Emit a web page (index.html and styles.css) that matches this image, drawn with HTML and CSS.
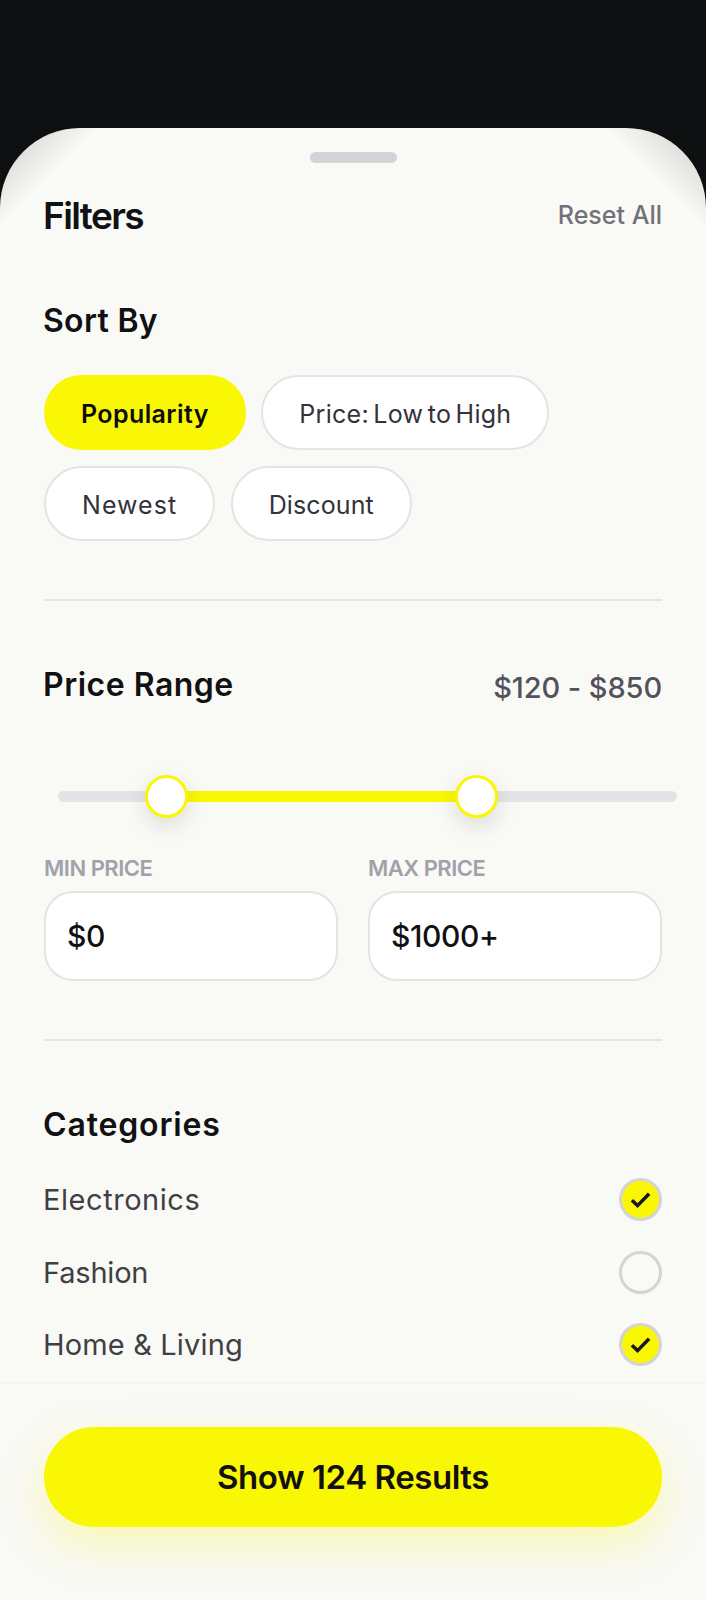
FILE: index.html
```html
<!DOCTYPE html>
<html lang="en">
<head>
<meta charset="utf-8">
<title>Filters</title>
<link rel="stylesheet" href="styles.css">
</head>
<body>
<main class="sheet">
  <div class="content">
    <div class="handle"></div>
    <header class="head">
      <h1 class="title">Filters</h1>
      <span class="reset">Reset All</span>
    </header>
    <h2 class="section sort-title">Sort By</h2>
    <div class="chips">
      <span class="chip chip-on">Popularity</span>
      <span class="chip">Price: Low to High</span>
      <span class="chip chip-wide">Newest</span>
      <span class="chip chip-tight">Discount</span>
    </div>
    <hr class="rule rule-sort">
    <div class="range-head">
      <h2 class="section range-title">Price Range</h2>
      <span class="range-value">$120 - $850</span>
    </div>
    <div class="slider">
      <div class="track"><div class="fill"></div></div>
      <span class="thumb thumb-a"></span>
      <span class="thumb thumb-b"></span>
    </div>
    <div class="inputs">
      <div class="field">
        <span class="field-label">MIN PRICE</span>
        <div class="field-box">$0</div>
      </div>
      <div class="field">
        <span class="field-label">MAX PRICE</span>
        <div class="field-box">$1000+</div>
      </div>
    </div>
    <hr class="rule rule-price">
    <h2 class="section cat-title">Categories</h2>
    <ul class="cats">
      <li class="cat"><span class="cat-name cat-wide">Electronics</span><span class="box box-on"><svg viewBox="0 0 16 16" class="tick"><path d="M2.5 8.5l3.6 3.4 7.4-7.6"/></svg></span></li>
      <li class="cat"><span class="cat-name cat-tight">Fashion</span><span class="box"></span></li>
      <li class="cat"><span class="cat-name">Home &amp; Living</span><span class="box box-on"><svg viewBox="0 0 16 16" class="tick"><path d="M2.5 8.5l3.6 3.4 7.4-7.6"/></svg></span></li>
    </ul>
  </div>
  <footer class="foot">
    <button class="cta" type="button">Show 124 Results</button>
  </footer>
</main>
</body>
</html>
```
FILE: styles.css
```css
* { box-sizing: border-box; }
html, body { margin: 0; padding: 0; }
body {
  width: 706px;
  height: 1600px;
  overflow: hidden;
  background: #0e0f11;
  padding-top: 128px;
  font-family: Inter, "Liberation Sans", sans-serif;
  color: #111114;
}
.sheet {
  position: relative;
  height: 1472px;
  display: flex;
  flex-direction: column;
  background: #f9f9f5;
  border-radius: 80px 80px 0 0;
  overflow: hidden;
}
.sheet::before, .sheet::after {
  content: "";
  position: absolute;
  top: 0;
  width: 100px;
  height: 100px;
}
.sheet::before { left: 0; background: linear-gradient(135deg, rgba(0,0,0,.11) 20%, rgba(0,0,0,0) 50%); }
.sheet::after { right: 0; background: linear-gradient(225deg, rgba(0,0,0,.11) 20%, rgba(0,0,0,0) 50%); }
.content {
  flex: 1;
  min-height: 0;
  padding: 24px 44px 0;
}
.handle {
  width: 87px;
  height: 11px;
  margin: 0 auto;
  border-radius: 6px;
  background: #d4d4d8;
}
.head {
  display: flex;
  justify-content: space-between;
  align-items: center;
  height: 44px;
  margin-top: 31px;
}
.title {
  margin: 0 0 0 -1px;
  font-size: 37px;
  line-height: 44px;
  font-weight: 600;
  letter-spacing: -1.6px;
}
.reset {
  font-size: 25px;
  font-weight: 500;
  color: #71717a;
  padding-bottom: 2px;
}
.section {
  margin: 0 0 0 -1px;
  font-size: 32px;
  line-height: 40px;
  font-weight: 600;
  letter-spacing: .3px;
}
.sort-title { margin-top: 63px; }
.chips {
  display: flex;
  flex-wrap: wrap;
  gap: 16px 15.5px;
  margin-top: 34px;
}
.chip {
  display: flex;
  align-items: center;
  height: 75px;
  padding: 2px 36px 0;
  border: 2px solid #e4e4e7;
  border-radius: 38px;
  background: #fff;
  font-size: 25px;
  font-weight: 400;
  color: #33333b;
  letter-spacing: .3px;
  word-spacing: -3px;
}
.chip-on {
  padding: 2px 35px 0;
  border-color: #f9f703;
  background: #f9f703;
  color: #0d0d10;
  font-weight: 600;
  letter-spacing: .4px;
}
.chip-wide { letter-spacing: 1.05px; }
.chip-tight { letter-spacing: .1px; }
.rule {
  height: 2px;
  margin: 0;
  border: 0;
  background: #e4e4e7;
}
.rule-sort { margin-top: 58px; }
.range-head {
  display: flex;
  justify-content: space-between;
  align-items: center;
  margin-top: 63px;
}
.range-title { letter-spacing: .5px; }
.range-value {
  font-size: 29px;
  font-weight: 500;
  color: #52525b;
  letter-spacing: -.1px;
  padding-top: 6px;
}
.slider {
  position: relative;
  height: 150px;
  padding-top: 86px;
}
.track {
  position: relative;
  width: 619px;
  height: 11px;
  margin-left: 14px;
  border-radius: 6px;
  background: #e4e4e7;
}
.fill {
  position: absolute;
  left: 110px;
  width: 310px;
  height: 11px;
  background: #f9f703;
}
.thumb {
  position: absolute;
  top: 70px;
  width: 43px;
  height: 43px;
  border: 3.6px solid #f9f703;
  border-radius: 50%;
  background: #fff;
  box-shadow: 0 8px 22px rgba(0,0,0,.12);
}
.thumb-a { left: 101px; }
.thumb-b { left: 411px; }
.inputs {
  display: grid;
  grid-template-columns: 1fr 1fr;
  gap: 30px;
}
.field-label {
  display: block;
  height: 26px;
  font-size: 22px;
  line-height: 26px;
  font-weight: 600;
  color: #a1a1aa;
  letter-spacing: -.5px;
}
.field-box {
  display: flex;
  align-items: center;
  height: 90px;
  margin-top: 10px;
  padding-left: 21px;
  border: 2px solid #e4e4e7;
  border-radius: 29px;
  background: #fff;
  font-size: 30px;
  font-weight: 500;
  color: #111114;
  letter-spacing: -.4px;
}
.rule-price { margin-top: 58px; }
.cat-title { margin-top: 64px; letter-spacing: .85px; }
.cats {
  list-style: none;
  display: flex;
  flex-direction: column;
  gap: 29px;
  margin: 33px 0 0;
  padding: 0;
}
.cat {
  display: flex;
  justify-content: space-between;
  align-items: center;
  height: 43.4px;
  font-size: 29px;
  color: #3f3f46;
  letter-spacing: .15px;
}
.cat-name { margin-left: -1px; }
.cat-wide { letter-spacing: .55px; }
.cat-tight { letter-spacing: -.2px; }
.box {
  display: flex;
  align-items: center;
  justify-content: center;
  width: 43px;
  height: 43px;
  border: 3.6px solid #d4d4d8;
  border-radius: 50%;
}
.box-on { background: #f9f703; }
.tick {
  width: 25px;
  height: 25px;
  fill: none;
  stroke: #17171c;
  stroke-width: 2.2;
  stroke-linecap: butt;
}
.foot {
  height: 218px;
  padding: 43px 44px 0;
  border-top: 2px solid #f4f4f5;
}
.cta {
  display: block;
  width: 100%;
  height: 100px;
  border: 0;
  border-radius: 50px;
  background: #f9f703;
  font-family: inherit;
  font-size: 33px;
  font-weight: 600;
  color: #111114;
  letter-spacing: -.45px;
  box-shadow: 0 18px 44px rgba(249,247,3,.26);
}
```
